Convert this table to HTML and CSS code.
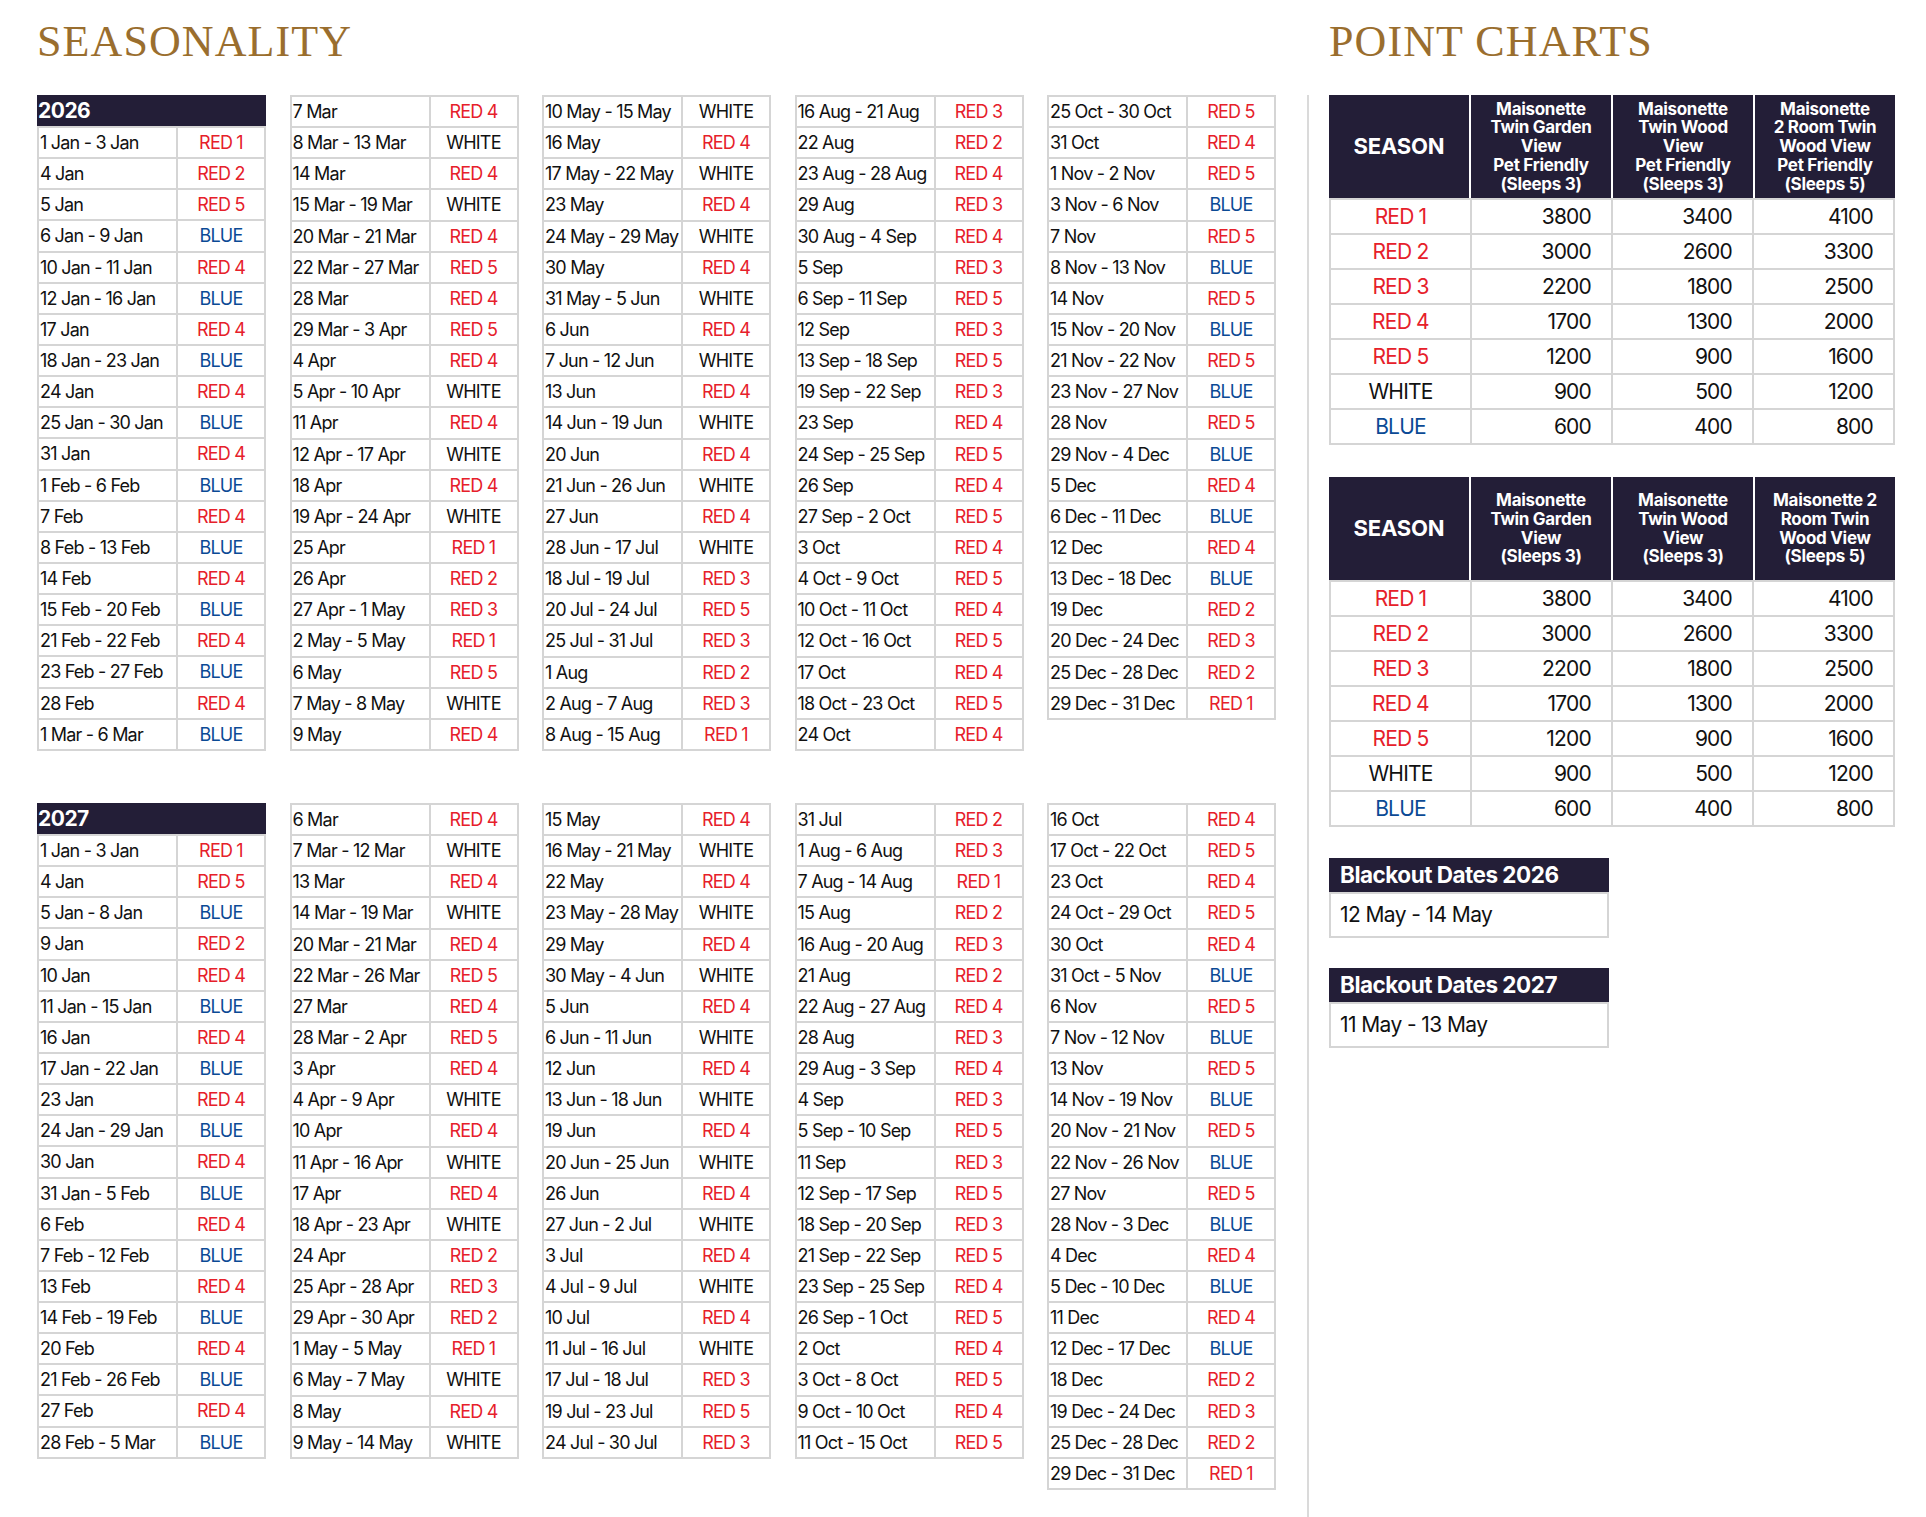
FILE: index.html
```html
<!DOCTYPE html>
<html lang="en">
<head>
<meta charset="utf-8">
<title>Seasonality &amp; Point Charts</title>
<link rel="stylesheet" href="styles.css">
</head>
<body>
<div class="page">
  <section class="seasonality">
    <h1 class="heading">SEASONALITY</h1>

    <div class="block">
      <div class="col">
        <div class="year">2026</div>
        <div class="grid">
          <div class="dt">1 Jan - 3 Jan</div><div class="sn r">RED 1</div>
          <div class="dt">4 Jan</div><div class="sn r">RED 2</div>
          <div class="dt">5 Jan</div><div class="sn r">RED 5</div>
          <div class="dt">6 Jan - 9 Jan</div><div class="sn b">BLUE</div>
          <div class="dt">10 Jan - 11 Jan</div><div class="sn r">RED 4</div>
          <div class="dt">12 Jan - 16 Jan</div><div class="sn b">BLUE</div>
          <div class="dt">17 Jan</div><div class="sn r">RED 4</div>
          <div class="dt">18 Jan - 23 Jan</div><div class="sn b">BLUE</div>
          <div class="dt">24 Jan</div><div class="sn r">RED 4</div>
          <div class="dt">25 Jan - 30 Jan</div><div class="sn b">BLUE</div>
          <div class="dt">31 Jan</div><div class="sn r">RED 4</div>
          <div class="dt">1 Feb - 6 Feb</div><div class="sn b">BLUE</div>
          <div class="dt">7 Feb</div><div class="sn r">RED 4</div>
          <div class="dt">8 Feb - 13 Feb</div><div class="sn b">BLUE</div>
          <div class="dt">14 Feb</div><div class="sn r">RED 4</div>
          <div class="dt">15 Feb - 20 Feb</div><div class="sn b">BLUE</div>
          <div class="dt">21 Feb - 22 Feb</div><div class="sn r">RED 4</div>
          <div class="dt">23 Feb - 27 Feb</div><div class="sn b">BLUE</div>
          <div class="dt">28 Feb</div><div class="sn r">RED 4</div>
          <div class="dt">1 Mar - 6 Mar</div><div class="sn b">BLUE</div>
        </div>
      </div>
      <div class="col">
        <div class="grid">
          <div class="dt">7 Mar</div><div class="sn r">RED 4</div>
          <div class="dt">8 Mar - 13 Mar</div><div class="sn w">WHITE</div>
          <div class="dt">14 Mar</div><div class="sn r">RED 4</div>
          <div class="dt">15 Mar - 19 Mar</div><div class="sn w">WHITE</div>
          <div class="dt">20 Mar - 21 Mar</div><div class="sn r">RED 4</div>
          <div class="dt">22 Mar - 27 Mar</div><div class="sn r">RED 5</div>
          <div class="dt">28 Mar</div><div class="sn r">RED 4</div>
          <div class="dt">29 Mar - 3 Apr</div><div class="sn r">RED 5</div>
          <div class="dt">4 Apr</div><div class="sn r">RED 4</div>
          <div class="dt">5 Apr - 10 Apr</div><div class="sn w">WHITE</div>
          <div class="dt">11 Apr</div><div class="sn r">RED 4</div>
          <div class="dt">12 Apr - 17 Apr</div><div class="sn w">WHITE</div>
          <div class="dt">18 Apr</div><div class="sn r">RED 4</div>
          <div class="dt">19 Apr - 24 Apr</div><div class="sn w">WHITE</div>
          <div class="dt">25 Apr</div><div class="sn r">RED 1</div>
          <div class="dt">26 Apr</div><div class="sn r">RED 2</div>
          <div class="dt">27 Apr - 1 May</div><div class="sn r">RED 3</div>
          <div class="dt">2 May - 5 May</div><div class="sn r">RED 1</div>
          <div class="dt">6 May</div><div class="sn r">RED 5</div>
          <div class="dt">7 May - 8 May</div><div class="sn w">WHITE</div>
          <div class="dt">9 May</div><div class="sn r">RED 4</div>
        </div>
      </div>
      <div class="col">
        <div class="grid">
          <div class="dt">10 May - 15 May</div><div class="sn w">WHITE</div>
          <div class="dt">16 May</div><div class="sn r">RED 4</div>
          <div class="dt">17 May - 22 May</div><div class="sn w">WHITE</div>
          <div class="dt">23 May</div><div class="sn r">RED 4</div>
          <div class="dt">24 May - 29 May</div><div class="sn w">WHITE</div>
          <div class="dt">30 May</div><div class="sn r">RED 4</div>
          <div class="dt">31 May - 5 Jun</div><div class="sn w">WHITE</div>
          <div class="dt">6 Jun</div><div class="sn r">RED 4</div>
          <div class="dt">7 Jun - 12 Jun</div><div class="sn w">WHITE</div>
          <div class="dt">13 Jun</div><div class="sn r">RED 4</div>
          <div class="dt">14 Jun - 19 Jun</div><div class="sn w">WHITE</div>
          <div class="dt">20 Jun</div><div class="sn r">RED 4</div>
          <div class="dt">21 Jun - 26 Jun</div><div class="sn w">WHITE</div>
          <div class="dt">27 Jun</div><div class="sn r">RED 4</div>
          <div class="dt">28 Jun - 17 Jul</div><div class="sn w">WHITE</div>
          <div class="dt">18 Jul - 19 Jul</div><div class="sn r">RED 3</div>
          <div class="dt">20 Jul - 24 Jul</div><div class="sn r">RED 5</div>
          <div class="dt">25 Jul - 31 Jul</div><div class="sn r">RED 3</div>
          <div class="dt">1 Aug</div><div class="sn r">RED 2</div>
          <div class="dt">2 Aug - 7 Aug</div><div class="sn r">RED 3</div>
          <div class="dt">8 Aug - 15 Aug</div><div class="sn r">RED 1</div>
        </div>
      </div>
      <div class="col">
        <div class="grid">
          <div class="dt">16 Aug - 21 Aug</div><div class="sn r">RED 3</div>
          <div class="dt">22 Aug</div><div class="sn r">RED 2</div>
          <div class="dt">23 Aug - 28 Aug</div><div class="sn r">RED 4</div>
          <div class="dt">29 Aug</div><div class="sn r">RED 3</div>
          <div class="dt">30 Aug - 4 Sep</div><div class="sn r">RED 4</div>
          <div class="dt">5 Sep</div><div class="sn r">RED 3</div>
          <div class="dt">6 Sep - 11 Sep</div><div class="sn r">RED 5</div>
          <div class="dt">12 Sep</div><div class="sn r">RED 3</div>
          <div class="dt">13 Sep - 18 Sep</div><div class="sn r">RED 5</div>
          <div class="dt">19 Sep - 22 Sep</div><div class="sn r">RED 3</div>
          <div class="dt">23 Sep</div><div class="sn r">RED 4</div>
          <div class="dt">24 Sep - 25 Sep</div><div class="sn r">RED 5</div>
          <div class="dt">26 Sep</div><div class="sn r">RED 4</div>
          <div class="dt">27 Sep - 2 Oct</div><div class="sn r">RED 5</div>
          <div class="dt">3 Oct</div><div class="sn r">RED 4</div>
          <div class="dt">4 Oct - 9 Oct</div><div class="sn r">RED 5</div>
          <div class="dt">10 Oct - 11 Oct</div><div class="sn r">RED 4</div>
          <div class="dt">12 Oct - 16 Oct</div><div class="sn r">RED 5</div>
          <div class="dt">17 Oct</div><div class="sn r">RED 4</div>
          <div class="dt">18 Oct - 23 Oct</div><div class="sn r">RED 5</div>
          <div class="dt">24 Oct</div><div class="sn r">RED 4</div>
        </div>
      </div>
      <div class="col">
        <div class="grid">
          <div class="dt">25 Oct - 30 Oct</div><div class="sn r">RED 5</div>
          <div class="dt">31 Oct</div><div class="sn r">RED 4</div>
          <div class="dt">1 Nov - 2 Nov</div><div class="sn r">RED 5</div>
          <div class="dt">3 Nov - 6 Nov</div><div class="sn b">BLUE</div>
          <div class="dt">7 Nov</div><div class="sn r">RED 5</div>
          <div class="dt">8 Nov - 13 Nov</div><div class="sn b">BLUE</div>
          <div class="dt">14 Nov</div><div class="sn r">RED 5</div>
          <div class="dt">15 Nov - 20 Nov</div><div class="sn b">BLUE</div>
          <div class="dt">21 Nov - 22 Nov</div><div class="sn r">RED 5</div>
          <div class="dt">23 Nov - 27 Nov</div><div class="sn b">BLUE</div>
          <div class="dt">28 Nov</div><div class="sn r">RED 5</div>
          <div class="dt">29 Nov - 4 Dec</div><div class="sn b">BLUE</div>
          <div class="dt">5 Dec</div><div class="sn r">RED 4</div>
          <div class="dt">6 Dec - 11 Dec</div><div class="sn b">BLUE</div>
          <div class="dt">12 Dec</div><div class="sn r">RED 4</div>
          <div class="dt">13 Dec - 18 Dec</div><div class="sn b">BLUE</div>
          <div class="dt">19 Dec</div><div class="sn r">RED 2</div>
          <div class="dt">20 Dec - 24 Dec</div><div class="sn r">RED 3</div>
          <div class="dt">25 Dec - 28 Dec</div><div class="sn r">RED 2</div>
          <div class="dt">29 Dec - 31 Dec</div><div class="sn r">RED 1</div>
        </div>
      </div>
    </div>

    <div class="block">
      <div class="col">
        <div class="year">2027</div>
        <div class="grid">
          <div class="dt">1 Jan - 3 Jan</div><div class="sn r">RED 1</div>
          <div class="dt">4 Jan</div><div class="sn r">RED 5</div>
          <div class="dt">5 Jan - 8 Jan</div><div class="sn b">BLUE</div>
          <div class="dt">9 Jan</div><div class="sn r">RED 2</div>
          <div class="dt">10 Jan</div><div class="sn r">RED 4</div>
          <div class="dt">11 Jan - 15 Jan</div><div class="sn b">BLUE</div>
          <div class="dt">16 Jan</div><div class="sn r">RED 4</div>
          <div class="dt">17 Jan - 22 Jan</div><div class="sn b">BLUE</div>
          <div class="dt">23 Jan</div><div class="sn r">RED 4</div>
          <div class="dt">24 Jan - 29 Jan</div><div class="sn b">BLUE</div>
          <div class="dt">30 Jan</div><div class="sn r">RED 4</div>
          <div class="dt">31 Jan - 5 Feb</div><div class="sn b">BLUE</div>
          <div class="dt">6 Feb</div><div class="sn r">RED 4</div>
          <div class="dt">7 Feb - 12 Feb</div><div class="sn b">BLUE</div>
          <div class="dt">13 Feb</div><div class="sn r">RED 4</div>
          <div class="dt">14 Feb - 19 Feb</div><div class="sn b">BLUE</div>
          <div class="dt">20 Feb</div><div class="sn r">RED 4</div>
          <div class="dt">21 Feb - 26 Feb</div><div class="sn b">BLUE</div>
          <div class="dt">27 Feb</div><div class="sn r">RED 4</div>
          <div class="dt">28 Feb - 5 Mar</div><div class="sn b">BLUE</div>
        </div>
      </div>
      <div class="col">
        <div class="grid">
          <div class="dt">6 Mar</div><div class="sn r">RED 4</div>
          <div class="dt">7 Mar - 12 Mar</div><div class="sn w">WHITE</div>
          <div class="dt">13 Mar</div><div class="sn r">RED 4</div>
          <div class="dt">14 Mar - 19 Mar</div><div class="sn w">WHITE</div>
          <div class="dt">20 Mar - 21 Mar</div><div class="sn r">RED 4</div>
          <div class="dt">22 Mar - 26 Mar</div><div class="sn r">RED 5</div>
          <div class="dt">27 Mar</div><div class="sn r">RED 4</div>
          <div class="dt">28 Mar - 2 Apr</div><div class="sn r">RED 5</div>
          <div class="dt">3 Apr</div><div class="sn r">RED 4</div>
          <div class="dt">4 Apr - 9 Apr</div><div class="sn w">WHITE</div>
          <div class="dt">10 Apr</div><div class="sn r">RED 4</div>
          <div class="dt">11 Apr - 16 Apr</div><div class="sn w">WHITE</div>
          <div class="dt">17 Apr</div><div class="sn r">RED 4</div>
          <div class="dt">18 Apr - 23 Apr</div><div class="sn w">WHITE</div>
          <div class="dt">24 Apr</div><div class="sn r">RED 2</div>
          <div class="dt">25 Apr - 28 Apr</div><div class="sn r">RED 3</div>
          <div class="dt">29 Apr - 30 Apr</div><div class="sn r">RED 2</div>
          <div class="dt">1 May - 5 May</div><div class="sn r">RED 1</div>
          <div class="dt">6 May - 7 May</div><div class="sn w">WHITE</div>
          <div class="dt">8 May</div><div class="sn r">RED 4</div>
          <div class="dt">9 May - 14 May</div><div class="sn w">WHITE</div>
        </div>
      </div>
      <div class="col">
        <div class="grid">
          <div class="dt">15 May</div><div class="sn r">RED 4</div>
          <div class="dt">16 May - 21 May</div><div class="sn w">WHITE</div>
          <div class="dt">22 May</div><div class="sn r">RED 4</div>
          <div class="dt">23 May - 28 May</div><div class="sn w">WHITE</div>
          <div class="dt">29 May</div><div class="sn r">RED 4</div>
          <div class="dt">30 May - 4 Jun</div><div class="sn w">WHITE</div>
          <div class="dt">5 Jun</div><div class="sn r">RED 4</div>
          <div class="dt">6 Jun - 11 Jun</div><div class="sn w">WHITE</div>
          <div class="dt">12 Jun</div><div class="sn r">RED 4</div>
          <div class="dt">13 Jun - 18 Jun</div><div class="sn w">WHITE</div>
          <div class="dt">19 Jun</div><div class="sn r">RED 4</div>
          <div class="dt">20 Jun - 25 Jun</div><div class="sn w">WHITE</div>
          <div class="dt">26 Jun</div><div class="sn r">RED 4</div>
          <div class="dt">27 Jun - 2 Jul</div><div class="sn w">WHITE</div>
          <div class="dt">3 Jul</div><div class="sn r">RED 4</div>
          <div class="dt">4 Jul - 9 Jul</div><div class="sn w">WHITE</div>
          <div class="dt">10 Jul</div><div class="sn r">RED 4</div>
          <div class="dt">11 Jul - 16 Jul</div><div class="sn w">WHITE</div>
          <div class="dt">17 Jul - 18 Jul</div><div class="sn r">RED 3</div>
          <div class="dt">19 Jul - 23 Jul</div><div class="sn r">RED 5</div>
          <div class="dt">24 Jul - 30 Jul</div><div class="sn r">RED 3</div>
        </div>
      </div>
      <div class="col">
        <div class="grid">
          <div class="dt">31 Jul</div><div class="sn r">RED 2</div>
          <div class="dt">1 Aug - 6 Aug</div><div class="sn r">RED 3</div>
          <div class="dt">7 Aug - 14 Aug</div><div class="sn r">RED 1</div>
          <div class="dt">15 Aug</div><div class="sn r">RED 2</div>
          <div class="dt">16 Aug - 20 Aug</div><div class="sn r">RED 3</div>
          <div class="dt">21 Aug</div><div class="sn r">RED 2</div>
          <div class="dt">22 Aug - 27 Aug</div><div class="sn r">RED 4</div>
          <div class="dt">28 Aug</div><div class="sn r">RED 3</div>
          <div class="dt">29 Aug - 3 Sep</div><div class="sn r">RED 4</div>
          <div class="dt">4 Sep</div><div class="sn r">RED 3</div>
          <div class="dt">5 Sep - 10 Sep</div><div class="sn r">RED 5</div>
          <div class="dt">11 Sep</div><div class="sn r">RED 3</div>
          <div class="dt">12 Sep - 17 Sep</div><div class="sn r">RED 5</div>
          <div class="dt">18 Sep - 20 Sep</div><div class="sn r">RED 3</div>
          <div class="dt">21 Sep - 22 Sep</div><div class="sn r">RED 5</div>
          <div class="dt">23 Sep - 25 Sep</div><div class="sn r">RED 4</div>
          <div class="dt">26 Sep - 1 Oct</div><div class="sn r">RED 5</div>
          <div class="dt">2 Oct</div><div class="sn r">RED 4</div>
          <div class="dt">3 Oct - 8 Oct</div><div class="sn r">RED 5</div>
          <div class="dt">9 Oct - 10 Oct</div><div class="sn r">RED 4</div>
          <div class="dt">11 Oct - 15 Oct</div><div class="sn r">RED 5</div>
        </div>
      </div>
      <div class="col">
        <div class="grid">
          <div class="dt">16 Oct</div><div class="sn r">RED 4</div>
          <div class="dt">17 Oct - 22 Oct</div><div class="sn r">RED 5</div>
          <div class="dt">23 Oct</div><div class="sn r">RED 4</div>
          <div class="dt">24 Oct - 29 Oct</div><div class="sn r">RED 5</div>
          <div class="dt">30 Oct</div><div class="sn r">RED 4</div>
          <div class="dt">31 Oct - 5 Nov</div><div class="sn b">BLUE</div>
          <div class="dt">6 Nov</div><div class="sn r">RED 5</div>
          <div class="dt">7 Nov - 12 Nov</div><div class="sn b">BLUE</div>
          <div class="dt">13 Nov</div><div class="sn r">RED 5</div>
          <div class="dt">14 Nov - 19 Nov</div><div class="sn b">BLUE</div>
          <div class="dt">20 Nov - 21 Nov</div><div class="sn r">RED 5</div>
          <div class="dt">22 Nov - 26 Nov</div><div class="sn b">BLUE</div>
          <div class="dt">27 Nov</div><div class="sn r">RED 5</div>
          <div class="dt">28 Nov - 3 Dec</div><div class="sn b">BLUE</div>
          <div class="dt">4 Dec</div><div class="sn r">RED 4</div>
          <div class="dt">5 Dec - 10 Dec</div><div class="sn b">BLUE</div>
          <div class="dt">11 Dec</div><div class="sn r">RED 4</div>
          <div class="dt">12 Dec - 17 Dec</div><div class="sn b">BLUE</div>
          <div class="dt">18 Dec</div><div class="sn r">RED 2</div>
          <div class="dt">19 Dec - 24 Dec</div><div class="sn r">RED 3</div>
          <div class="dt">25 Dec - 28 Dec</div><div class="sn r">RED 2</div>
          <div class="dt">29 Dec - 31 Dec</div><div class="sn r">RED 1</div>
        </div>
      </div>
    </div>
  </section>

  <div class="separator"></div>

  <section class="charts">
    <h1 class="heading">POINT CHARTS</h1>

    <div class="pc">
      <div class="pc-head">
        <div class="season">SEASON</div>
        <div>Maisonette<br>Twin Garden<br>View<br>Pet Friendly<br>(Sleeps 3)</div>
        <div>Maisonette<br>Twin Wood<br>View<br>Pet Friendly<br>(Sleeps 3)</div>
        <div>Maisonette<br>2 Room Twin<br>Wood View<br>Pet Friendly<br>(Sleeps 5)</div>
      </div>
      <div class="pc-body">
        <div class="sn r">RED 1</div><div class="num">3800</div><div class="num">3400</div><div class="num">4100</div>
        <div class="sn r">RED 2</div><div class="num">3000</div><div class="num">2600</div><div class="num">3300</div>
        <div class="sn r">RED 3</div><div class="num">2200</div><div class="num">1800</div><div class="num">2500</div>
        <div class="sn r">RED 4</div><div class="num">1700</div><div class="num">1300</div><div class="num">2000</div>
        <div class="sn r">RED 5</div><div class="num">1200</div><div class="num">900</div><div class="num">1600</div>
        <div class="sn w">WHITE</div><div class="num">900</div><div class="num">500</div><div class="num">1200</div>
        <div class="sn b">BLUE</div><div class="num">600</div><div class="num">400</div><div class="num">800</div>
      </div>
    </div>

    <div class="pc">
      <div class="pc-head">
        <div class="season">SEASON</div>
        <div>Maisonette<br>Twin Garden<br>View<br>(Sleeps 3)</div>
        <div>Maisonette<br>Twin Wood<br>View<br>(Sleeps 3)</div>
        <div>Maisonette 2<br>Room Twin<br>Wood View<br>(Sleeps 5)</div>
      </div>
      <div class="pc-body">
        <div class="sn r">RED 1</div><div class="num">3800</div><div class="num">3400</div><div class="num">4100</div>
        <div class="sn r">RED 2</div><div class="num">3000</div><div class="num">2600</div><div class="num">3300</div>
        <div class="sn r">RED 3</div><div class="num">2200</div><div class="num">1800</div><div class="num">2500</div>
        <div class="sn r">RED 4</div><div class="num">1700</div><div class="num">1300</div><div class="num">2000</div>
        <div class="sn r">RED 5</div><div class="num">1200</div><div class="num">900</div><div class="num">1600</div>
        <div class="sn w">WHITE</div><div class="num">900</div><div class="num">500</div><div class="num">1200</div>
        <div class="sn b">BLUE</div><div class="num">600</div><div class="num">400</div><div class="num">800</div>
      </div>
    </div>

    <div class="blackout">
      <div class="bo-head">Blackout Dates 2026</div>
      <div class="bo-body">12 May - 14 May</div>
    </div>
    <div class="blackout">
      <div class="bo-head">Blackout Dates 2027</div>
      <div class="bo-body">11 May - 13 May</div>
    </div>
  </section>
</div>
</body>
</html>
```

FILE: styles.css
```css
* { box-sizing: border-box; }

html, body {
  margin: 0;
  padding: 0;
  background: #ffffff;
}

body {
  font-family: Inter, "Liberation Sans", Arial, sans-serif;
  color: #111111;
}

.page {
  display: flex;
  align-items: stretch;
  width: 1926px;
  min-height: 1517px;
  padding-left: 37px;
}

.heading {
  margin: 0;
  height: 95px;
  padding-top: 17px;
  font-family: "Liberation Serif", "Times New Roman", serif;
  font-weight: normal;
  font-size: 44px;
  line-height: 50px;
  letter-spacing: 1.1px;
  color: #9a6e2e;
}

/* ---------- Seasonality ---------- */
.seasonality {
  width: 1239px;
  flex: none;
}

.block {
  display: flex;
  align-items: flex-start;
  gap: 23.5px;
}

.block + .block {
  margin-top: 52px;
}

.col {
  width: 229px;
  flex: none;
}

.year {
  height: 31px;
  padding-left: 1px;
  background: #231e37;
  color: #ffffff;
  font-weight: 700;
  font-size: 21px;
  line-height: 31px;
  letter-spacing: -0.5px;
}

.grid {
  display: grid;
  grid-template-columns: 137px 86px;
  grid-auto-rows: 29.15px;
  gap: 2px;
  padding: 2px;
  background: #d5d5d5;
}

.grid > div {
  background: #ffffff;
  font-size: 18px;
  line-height: 29px;
  white-space: nowrap;
  letter-spacing: -0.8px;
  overflow: hidden;
}

.dt {
  padding-left: 1px;
}

.sn {
  text-align: center;
}

.r { color: #e6202a; }
.b { color: #0b4a95; }
.w { color: #111111; }

/* ---------- Separator ---------- */
.separator {
  width: 2px;
  flex: none;
  margin: 95px 20px 0 31px;
  background: #dadada;
}

/* ---------- Point charts ---------- */
.charts {
  width: 566px;
  flex: none;
}

.pc + .pc {
  margin-top: 32px;
}

.pc-head {
  display: flex;
  gap: 2px;
  height: 103px;
  background: #ffffff;
}

.pc-head > div {
  flex: 1;
  display: flex;
  align-items: center;
  justify-content: center;
  text-align: center;
  background: #231e37;
  color: #ffffff;
  font-weight: 700;
  font-size: 17px;
  line-height: 18.7px;
  letter-spacing: -0.3px;
}

.pc-head > .season {
  font-size: 22px;
  letter-spacing: -0.2px;
}

.pc-body {
  display: grid;
  grid-template-columns: repeat(4, 139px);
  grid-auto-rows: 33px;
  gap: 2px;
  padding: 2px;
  background: #d5d5d5;
}

.pc-body > div {
  background: #ffffff;
  font-size: 21px;
  line-height: 33px;
  letter-spacing: -0.8px;
}

.pc-body > .num {
  text-align: right;
  padding-right: 20px;
}

/* ---------- Blackout ---------- */
.blackout {
  width: 280px;
  margin-top: 31px;
}

.blackout + .blackout {
  margin-top: 30px;
}

.bo-head {
  height: 34px;
  padding-left: 11px;
  background: #231e37;
  color: #ffffff;
  font-weight: 700;
  font-size: 22.5px;
  line-height: 34px;
  letter-spacing: -0.5px;
}

.bo-body {
  height: 46px;
  padding-left: 9px;
  border: 2px solid #d5d5d5;
  font-size: 21px;
  line-height: 42px;
  letter-spacing: -0.6px;
}
```
